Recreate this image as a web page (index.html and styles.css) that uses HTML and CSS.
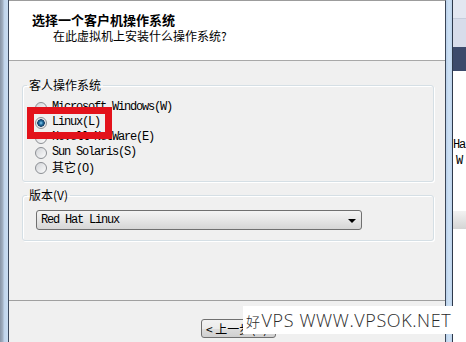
FILE: index.html
```html
<!DOCTYPE html>
<html lang="zh-CN">
<head>
  <meta charset="UTF-8" />
  <title>新建虚拟机向导</title>
  <link rel="stylesheet" href="styles.css">
</head>
<body>
  <div class="screen">
    <div class="frame-left"></div>

    <div class="dialog">
      <div class="header">
        <div class="title">选择一个客户机操作系统</div>
        <div class="subtitle">在此虚拟机上安装什么操作系统?</div>
      </div>

      <div class="content">
        <fieldset class="group group-os">
          <legend>客人操作系统</legend>
          <label class="radio"><input type="radio" name="os"><span class="mono">Microsoft Windows(W)</span></label>
          <label class="radio"><input type="radio" name="os" checked><span class="mono">Linux(L)</span></label>
          <label class="radio"><input type="radio" name="os"><span class="mono">Novell NetWare(E)</span></label>
          <label class="radio"><input type="radio" name="os"><span class="mono">Sun Solaris(S)</span></label>
          <label class="radio"><input type="radio" name="os"><span class="mono"><span class="cjk">其它</span>(O)</span></label>
        </fieldset>

        <fieldset class="group group-version">
          <legend>版本(V)</legend>
          <div class="select">
            <span class="mono">Red Hat Linux</span>
            <i class="arrow"></i>
          </div>
        </fieldset>
      </div>

      <div class="footer">
        <button class="btn">&lt; 上一步(B)</button>
      </div>
    </div>

    <div class="frame-right"></div>

    <div class="behind">
      <div class="b-top"></div>
      <div class="b-mid"></div>
      <div class="b-bar"></div>
      <div class="b-body">
        <div class="b-text mono">Ha</div>
        <div class="b-text b-indent mono">W</div>
        <div class="b-strip"></div>
      </div>
    </div>

    <!-- annotation laid over the screenshot -->
    <div class="highlight"></div>
    <div class="watermark"><span class="wm-mark">好</span>VPS WWW.VPSOK.NET</div>
  </div>
</body>
</html>
```

FILE: styles.css
```css
* {
  box-sizing: border-box;
}

body {
  margin: 0;
  background: #fff;
  font-family: "Noto Sans CJK SC", sans-serif;
  color: #000;
}

.screen {
  position: relative;
  display: flex;
  width: 466px;
  height: 342px;
  overflow: hidden;
}

.mono {
  font-family: "Liberation Mono", "Noto Sans CJK SC", monospace;
  font-size: 12px;
  letter-spacing: -1.2px;
}

.cjk {
  font-family: "Noto Sans CJK SC", sans-serif;
  letter-spacing: 0;
}

/* window frames */
.frame-left {
  width: 9px;
  background: linear-gradient(to right, #8794a6 0, #a4b2c4 3px, #bfd3ea 4px, #c9dcf1 8px, #3a475b 8px);
}

.frame-right {
  width: 7px;
  background: linear-gradient(to right, #b9d0ea 0, #cfe2f5 3px, #bcd3ec 6px, #2e394b 6px);
}

/* dialog */
.dialog {
  width: 437px;
  display: flex;
  flex-direction: column;
  background: #f0f0f0;
  border-top: 1px solid #9c9c9c;
  border-right: 1px solid #3b4657;
}

.header {
  height: 60px;
  padding: 10px 0 0 23px;
  background: #fff;
  border-bottom: 1px solid #a8a8a8;
}

.title {
  font-size: 13px;
  line-height: 17px;
  font-weight: bold;
}

.subtitle {
  margin-left: 21px;
  font-size: 12px;
  line-height: 15px;
}

.content {
  padding: 17px 11px 0 13px;
}

.group {
  margin: 0;
  padding: 8px 0 6px 12px;
  min-width: 0;
  border: 1px solid #d5dfe5;
  border-radius: 3px;
  box-shadow: inset 1px 1px #fff, 1px 1px #fff;
}

.group legend {
  margin-left: -8px;
  padding: 0 2px;
  font-size: 12px;
  line-height: 14px;
  color: #000;
}

.group-version {
  margin-top: 6px;
  padding-bottom: 10px;
}

.radio {
  display: flex;
  align-items: center;
  gap: 5px;
  height: 15px;
  line-height: 15px;
}

.radio input {
  appearance: none;
  -webkit-appearance: none;
  width: 12px;
  height: 12px;
  margin: 0;
  border: 1px solid #8c8f94;
  border-radius: 50%;
  background: linear-gradient(135deg, #d2d4d8, #fcfcfc);
}

.radio input:checked {
  background: radial-gradient(circle, #8fd0f5 0, #1c6a9c 2px, #173f66 3.5px, #dfe2e6 4px, #f8f8f8 6px);
}

.select {
  display: flex;
  align-items: center;
  justify-content: space-between;
  width: 326px;
  height: 20px;
  margin-left: 1px;
  padding: 0 5px 0 4px;
  border: 1px solid #707070;
  border-radius: 3px;
  background: linear-gradient(#f4f4f4, #e6e6e6 50%, #d6d6d6);
}

.arrow {
  width: 0;
  height: 0;
  border-left: 4px solid transparent;
  border-right: 4px solid transparent;
  border-top: 4px solid #000;
  margin-top: 1px;
}

.footer {
  margin-top: auto;
  height: 42px;
  padding: 14px 0 0 192px;
  border-top: 1px solid #a0a0a0;
}

.btn {
  width: 75px;
  height: 19px;
  padding: 0 0 0 4px;
  border: 1px solid #707070;
  border-radius: 3px;
  background: linear-gradient(#f2f2f2, #ebebeb 50%, #dddddd 51%, #cfcfcf);
  font-family: "Noto Sans CJK SC", sans-serif;
  font-size: 12px;
  line-height: 17px;
  color: #000;
  text-align: left;
}

/* window behind the dialog */
.behind {
  width: 13px;
  display: flex;
  flex-direction: column;
}

.b-top {
  height: 19px;
  background: #e3e7f1;
  border-bottom: 1px solid #c6cddc;
}

.b-mid {
  height: 28px;
  background: #d7dcea;
}

.b-bar {
  height: 24px;
  background: #3c4a6b;
}

.b-body {
  flex: 1;
  padding-top: 66px;
  background: #fff;
}

.b-text {
  height: 16px;
  line-height: 16px;
  white-space: nowrap;
}

.b-indent {
  padding-left: 3px;
}

.b-strip {
  height: 18px;
  margin-top: 42px;
  background: linear-gradient(#f2f2f2, #d4d4d4);
}

/* overlays */
.highlight {
  position: absolute;
  left: 27px;
  top: 107px;
  width: 85px;
  height: 32px;
  border: 7px solid #e3121b;
}

.watermark {
  position: absolute;
  left: 243px;
  top: 306px;
  width: 217px;
  height: 28px;
  padding-left: 3px;
  background: #fff;
  font-family: "Open Sans", sans-serif;
  font-size: 18px;
  font-weight: 300;
  letter-spacing: 0.6px;
  line-height: 28px;
  color: #2b2b2b;
  white-space: nowrap;
}

.wm-mark {
  font-family: "Noto Sans CJK SC", sans-serif;
  font-size: 14px;
  margin-right: 1px;
}
```
